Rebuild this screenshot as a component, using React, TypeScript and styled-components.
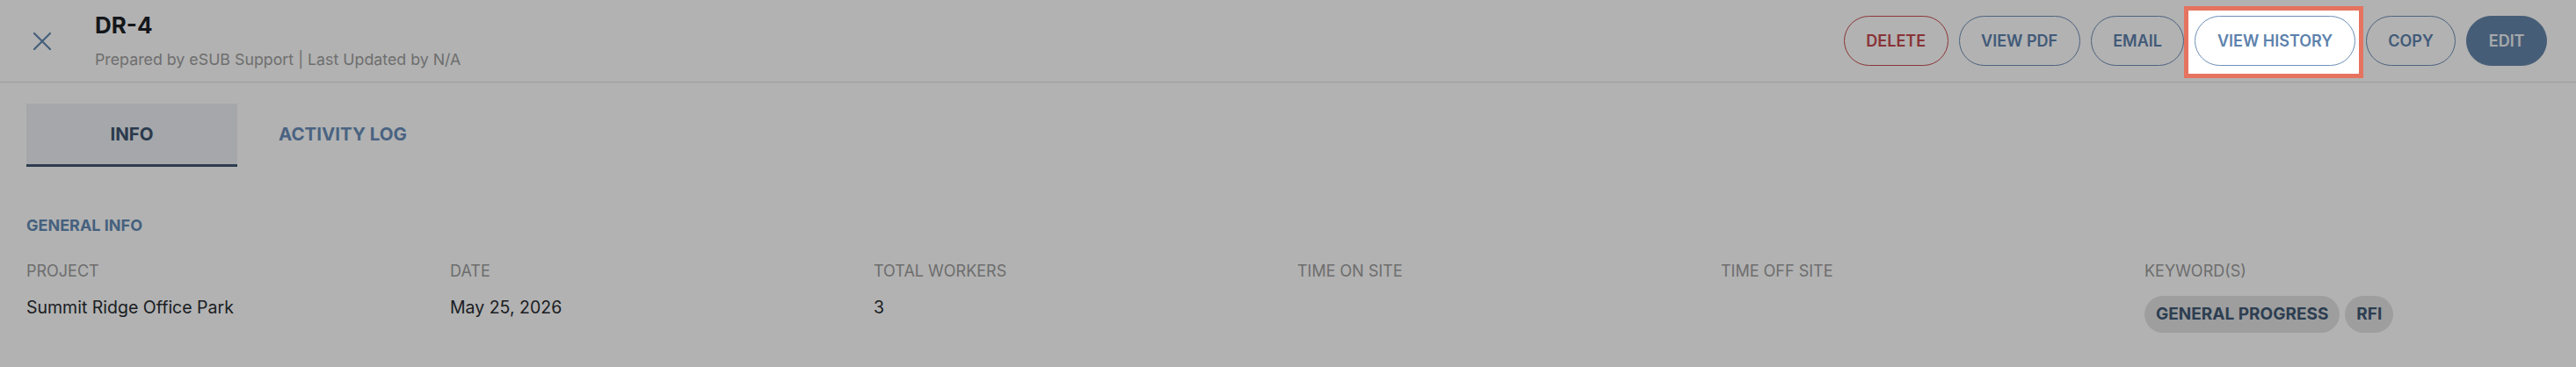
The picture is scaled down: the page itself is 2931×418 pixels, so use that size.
import React from 'react';
import styled, {createGlobalStyle} from 'styled-components';

const GlobalStyle = createGlobalStyle`
  body {
    margin: 0;
    background: #ffffff;
    font-family: Inter, "Noto Sans", sans-serif;
  }
`;

const Page = styled.div`
  min-height: 418px;
`;

// Header
const Header = styled.header`
  display: flex;
  align-items: center;
  height: 93px;
  border-bottom: 1px solid #e0e0e0;
  padding: 0 33px 0 26px;
`;

const CloseButton = styled.button`
  display: flex;
  align-items: center;
  justify-content: center;
  width: 44px;
  height: 44px;
  margin-right: 38px;
  padding: 0;
  border: none;
  background: none;
  color: #6389b1;
  cursor: pointer;
`;

const TitleBlock = styled.div`
  display: flex;
  flex-direction: column;
  gap: 11px;
`;

const Title = styled.h1`
  margin: 0;
  font-size: 26px;
  font-weight: 700;
  line-height: 32px;
  color: #1e2228;
`;

const Subtitle = styled.div`
  font-size: 17.8px;
  line-height: 24px;
  color: #9e9e9e;
`;

const Actions = styled.div`
  display: flex;
  align-items: center;
  gap: 12px;
  margin-left: auto;
`;

type Variant = 'danger' | 'outline' | 'primary';

const ActionButton = styled.button<{ $variant: Variant }>`
  height: 57px;
  padding: 0 24.5px;
  border-radius: 29px;
  font-family: inherit;
  font-size: 18px;
  font-weight: 600;
  cursor: pointer;
  border: 1px solid ${p => (p.$variant === 'danger' ? '#c84d51' : p.$variant === 'primary' ? '#6586ab' : '#6d8fb6')};
  background: ${p => (p.$variant === 'primary' ? '#6586ab' : '#ffffff')};
  color: ${p => (p.$variant === 'danger' ? '#c44a4e' : p.$variant === 'primary' ? '#eef1f5' : '#5d82ad')};
`;

// onboarding spotlight round the highlighted action
const Spotlight = styled.div`
  position: relative;
  z-index: 10;
  display: flex;

  &::before {
    content: '';
    position: absolute;
    top: -11px;
    bottom: -14px;
    left: -12px;
    right: -9px;
    box-sizing: border-box;
    border: 5px solid #e5735f;
    background: #ffffff;
    box-shadow: 0 0 0 9999px rgba(0, 0, 0, 0.3);
    z-index: -1;
  }
`;

// Tabs
const TabBar = styled.div`
  display: flex;
  margin-top: 24px;
  padding-left: 30px;
`;

const Tab = styled.div<{ $active?: boolean }>`
  display: flex;
  align-items: center;
  justify-content: center;
  box-sizing: border-box;
  width: 240px;
  height: 72px;
  border-bottom: 3px solid ${p => (p.$active ? '#425773' : 'transparent')};
  background: ${p => (p.$active ? '#edf0f4' : 'transparent')};
  color: ${p => (p.$active ? '#3e536d' : '#6a8fba')};
  font-size: 20.5px;
  font-weight: 700;
`;

// General info
const Section = styled.section`
  padding: 55px 33px 0 30px;
`;

const SectionTitle = styled.h2`
  margin: 0;
  font-size: 18px;
  font-weight: 700;
  line-height: 24px;
  color: #648bb5;
`;

const FieldGrid = styled.div`
  display: grid;
  grid-template-columns: repeat(6, 1fr);
  column-gap: 24px;
  margin-top: 28px;
`;

const Field = styled.div`
  display: flex;
  flex-direction: column;
  gap: 16px;
`;

const FieldLabel = styled.div`
  font-size: 18px;
  line-height: 24px;
  color: #9d9d9d;
`;

const FieldValue = styled.div`
  display: flex;
  gap: 6px;
  min-height: 26px;
  font-size: 19.5px;
  line-height: 26px;
  color: #282b31;
`;

const Chip = styled.span`
  display: inline-flex;
  align-items: center;
  height: 42px;
  padding: 0 13px;
  border-radius: 21px;
  background: #e2e2e2;
  color: #405975;
  font-size: 19px;
  font-weight: 700;
`;

const CloseIcon = () => (
  <svg width="22" height="22" viewBox="0 0 22 22" fill="none">
    <path d="M2 2L20 20M20 2L2 20" stroke="currentColor" strokeWidth="2.2" strokeLinecap="round" />
  </svg>
);

const fields = [
  {label: 'PROJECT', value: 'Summit Ridge Office Park'},
  {label: 'DATE', value: 'May 25, 2026'},
  {label: 'TOTAL WORKERS', value: '3'},
  {label: 'TIME ON SITE', value: ''},
  {label: 'TIME OFF SITE', value: ''},
];

const keywords = ['GENERAL PROGRESS', 'RFI'];

function App() {
  return (
    <Page>
      <GlobalStyle />
      <Header>
        <CloseButton aria-label="Close">
          <CloseIcon />
        </CloseButton>
        <TitleBlock>
          <Title>DR-4</Title>
          <Subtitle>Prepared by eSUB Support | Last Updated by N/A</Subtitle>
        </TitleBlock>
        <Actions>
          <ActionButton $variant="danger">DELETE</ActionButton>
          <ActionButton $variant="outline">VIEW PDF</ActionButton>
          <ActionButton $variant="outline">EMAIL</ActionButton>
          <Spotlight>
            <ActionButton $variant="outline">VIEW HISTORY</ActionButton>
          </Spotlight>
          <ActionButton $variant="outline">COPY</ActionButton>
          <ActionButton $variant="primary">EDIT</ActionButton>
        </Actions>
      </Header>

      <TabBar>
        <Tab $active>INFO</Tab>
        <Tab>ACTIVITY LOG</Tab>
      </TabBar>

      <Section>
        <SectionTitle>GENERAL INFO</SectionTitle>
        <FieldGrid>
          {fields.map(f => (
            <Field key={f.label}>
              <FieldLabel>{f.label}</FieldLabel>
              <FieldValue>{f.value}</FieldValue>
            </Field>
          ))}
          <Field>
            <FieldLabel>KEYWORD(S)</FieldLabel>
            <FieldValue>
              {keywords.map(k => (
                <Chip key={k}>{k}</Chip>
              ))}
            </FieldValue>
          </Field>
        </FieldGrid>
      </Section>
    </Page>
  );
}

export default App;
